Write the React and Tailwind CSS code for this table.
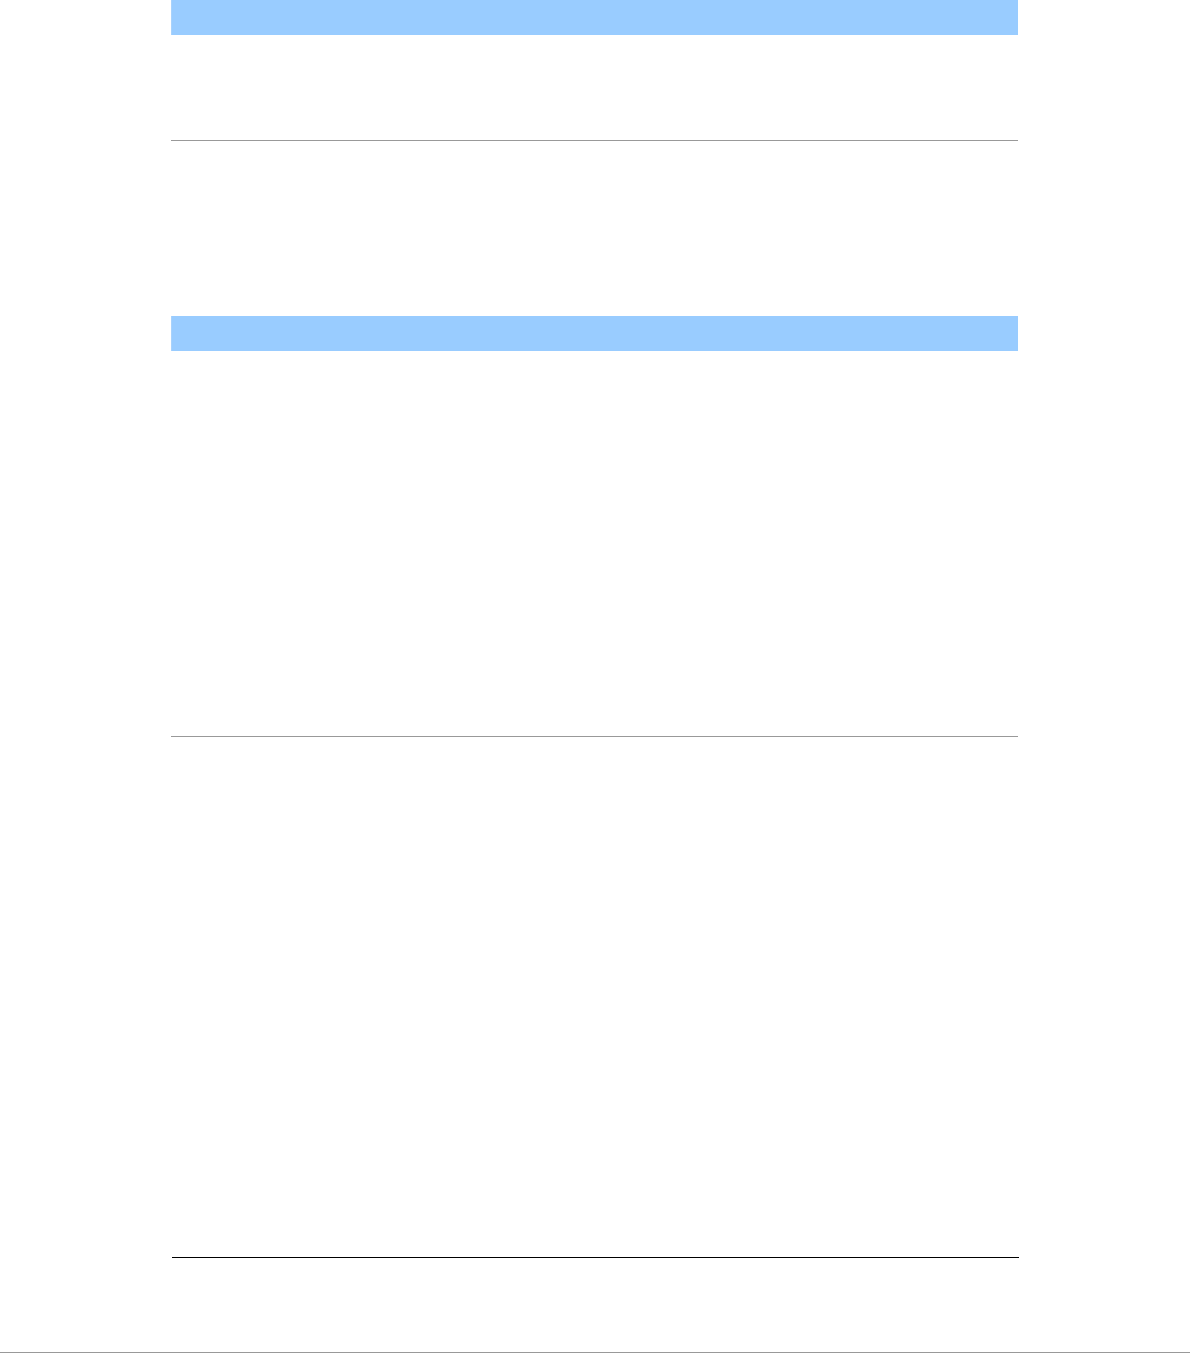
export default function App() {
  return (
    <div className="w-[1190px] h-[1353px] bg-white flex flex-col" style={{ fontFamily: '"Liberation Sans", Arial, sans-serif' }}>
      <div className="ml-[171px] w-[847px] flex flex-col">
        <div className="h-[35px] bg-[#99ccff] flex">
          <div className="w-[250px] border-l border-[#a8d2fc]"></div>
          <div className="flex-1"></div>
        </div>
        <div className="h-[105px]"></div>
        <div className="h-px bg-[#999999]"></div>
        <div className="h-[175px]"></div>
        <div className="h-[35px] bg-[#99ccff] flex">
          <div className="w-[250px] border-l border-[#a8d2fc]"></div>
          <div className="flex-1"></div>
        </div>
        <div className="h-[385px]"></div>
        <div className="h-px bg-[#999999]"></div>
        <div className="h-[520px]"></div>
        <div className="ml-px w-[847px] shrink-0 h-px bg-black"></div>
        <div className="h-[94px]"></div>
      </div>
      <div className="w-full h-px bg-[#999999]"></div>
    </div>
  );
}
